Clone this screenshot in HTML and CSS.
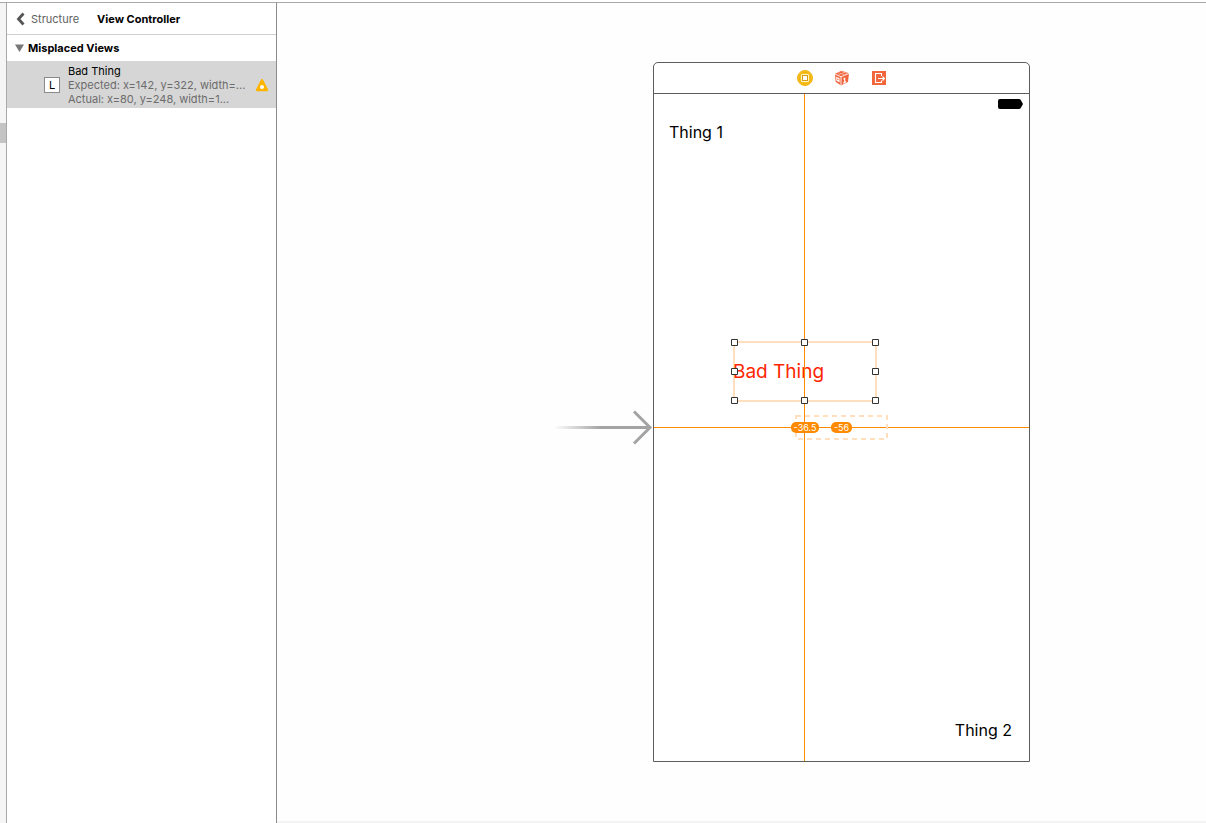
FILE: index.html
```html
<!DOCTYPE html>
<html lang="en">
<head>
<meta charset="utf-8">
<title>View Controller</title>
<link rel="stylesheet" href="styles.css">
</head>
<body>
<div class="workspace">
  <div class="gutter"><span class="gutter-thumb"></span></div>
  <aside class="outline">
    <nav class="crumbs">
      <button class="back" type="button">
        <svg width="9" height="14" viewBox="0 0 9 14" aria-hidden="true"><path d="M7.500 1.500 2.500 7l5 5.500" fill="none" stroke="#555" stroke-width="2.800"/></svg>
        <span>Structure</span>
      </button>
      <h1 class="crumb-title">View Controller</h1>
    </nav>
    <section>
      <h2 class="group">
        <svg width="9" height="8" viewBox="0 0 9 8" aria-hidden="true"><path d="M0 0.500h9L4.500 8z" fill="#777"/></svg>
        <span>Misplaced Views</span>
      </h2>
      <div class="issue">
        <span class="kind">L</span>
        <div class="details">
          <p class="name">Bad Thing</p>
          <p>Expected: x=142, y=322, width=...</p>
          <p>Actual: x=80, y=248, width=1...</p>
        </div>
        <button class="warn" type="button" aria-label="Misplaced view warning">
          <svg width="14" height="14" viewBox="0 0 14 14" aria-hidden="true"><path d="M7 2.200 12 12H2z" fill="#ffb400" stroke="#ffb400" stroke-width="2.400" stroke-linejoin="round"/><circle cx="7" cy="9" r="2" fill="#fff"/></svg>
        </button>
      </div>
    </section>
  </aside>
  <main class="canvas">
    <svg class="entry" width="100" height="36" viewBox="0 0 100 36" aria-hidden="true">
      <defs><linearGradient id="fade"><stop offset="0" stop-color="#a3a3a3" stop-opacity="0"/><stop offset=".5" stop-color="#a3a3a3"/></linearGradient></defs>
      <path d="M1 17h95v3H1z" fill="url(#fade)"/>
      <path d="M81 2.500 97 18.500 81 34.500" fill="none" stroke="#a3a3a3" stroke-width="3"/>
    </svg>
    <article class="scene">
      <header class="dock">
        <svg width="16" height="16" viewBox="0 0 16 16" aria-hidden="true"><circle cx="8" cy="8" r="7.500" fill="#fbc51b" stroke="#eeb014"/><circle cx="8" cy="8" r="5.800" fill="none" stroke="#e8aa12" stroke-width=".8"/><path d="M4.500 4.500h7v7h-7z" fill="#d99a16" stroke="#fff3c8"/><path d="M6 6h4v4H6z" fill="#fff"/></svg>
        <svg width="16" height="16" viewBox="0 0 16 16" aria-hidden="true"><path d="M7.500.800 15 3.200 14 12 7 15.500 1.600 11.800 1 3.800z" fill="#f0643c"/><path d="M1 4 7 6.800 15 3.400M7 6.800v8.700" fill="none" stroke="#fff" stroke-width=".9"/><path d="M4 2.700 11 5M7.500 1.500 13 3.500M11.500 2 4 5" fill="none" stroke="#fbc0ac" stroke-width=".6"/><path d="M2.800 7.500 5 8.500v3L2.800 10.200zM9.500 9.200l1.200-.8v4.200m-1.500.700 3-1.500" fill="none" stroke="#fff" stroke-width="1.100"/></svg>
        <svg width="16" height="16" viewBox="0 0 16 16" aria-hidden="true"><path d="M1 1h14v14H1z" fill="#f2663c"/><path d="M10.500 6V3.500h-6v9h6V10.500M7 8.500h6M11.500 6.500l2 2-2 2" fill="none" stroke="#fff" stroke-width="1.100"/></svg>
      </header>
      <div class="screen">
        <div class="status">
          <svg width="25" height="10" viewBox="0 0 25 10" aria-hidden="true"><rect width="23" height="10" rx="2"/><path d="M22 1.500h1l2 3.500-2 3.500h-1z"/></svg>
        </div>
        <p class="label">Thing 1</p>
        <p class="label label-end">Thing 2</p>
        <div class="guide guide-h"></div>
        <div class="selection"><span>Bad Thing</span></div>
        <svg class="expected" width="93" height="25" viewBox="0 0 93 25" aria-hidden="true"><rect x="1" y="1" width="91" height="23" fill="none" stroke="#ffdfbd" stroke-width="2" stroke-dasharray="5 4"/></svg>
        <div class="guide guide-v"></div>
        <svg class="handles" width="148" height="65" viewBox="0 0 148 65" aria-hidden="true">
          <g fill="#fff" stroke="#333">
            <path d="M.500.500h6v6h-6zM70.500.500h6v6h-6zM141.500.500h6v6h-6zM.500 29.500h6v6h-6zM141.500 29.500h6v6h-6zM.500 58.500h6v6h-6zM70.500 58.500h6v6h-6zM141.500 58.500h6v6h-6z"/>
          </g>
        </svg>
        <span class="offset offset-x">-36.5</span>
        <span class="offset offset-y">-56</span>
      </div>
    </article>
  </main>
</div>
</body>
</html>
```
FILE: styles.css
```css
* { box-sizing: border-box; }
body {
  margin: 0;
  background: #fff;
  color: #000;
  font: 11px/14px Inter, "Liberation Sans", sans-serif;
}
h1, h2, p { margin: 0; font-size: inherit; }
button { border: 0; padding: 0; background: none; font: inherit; color: inherit; }
svg { display: block; flex: none; }

.workspace {
  display: flex;
  min-height: 100vh;
  padding-top: 2px;
}
.gutter {
  width: 7px;
  padding-top: 120px;
  border-top: 1px solid #a8a8a8;
  border-right: 1px solid #a8a8a8;
  background: #f5f5f5;
}
.gutter-thumb { display: block; height: 20px; background: #c4c4c4; }

.outline {
  width: 270px;
  border-top: 1px solid #a8a8a8;
  border-right: 1px solid #8c8c8c;
}
.crumbs {
  display: flex;
  align-items: center;
  gap: 18px;
  height: 32px;
  padding-left: 9px;
  border-bottom: 1px solid #cfcfcf;
}
.back { display: flex; align-items: center; gap: 6px; color: #606060; }
.crumb-title, .group { font-weight: 700; }
.group {
  display: flex;
  align-items: center;
  gap: 4px;
  height: 26px;
  padding-left: 8px;
}
.issue {
  display: flex;
  align-items: center;
  gap: 8px;
  height: 47px;
  padding: 0 7px 0 37px;
  background: #d6d6d6;
  color: #6c6c6c;
}
.kind {
  width: 16px;
  height: 16px;
  border: 1px solid #8a8a8a;
  background: #fff;
  color: #000;
  text-align: center;
}
.details { flex: 1; white-space: nowrap; }
.name { color: #000; }

.canvas {
  position: relative;
  flex: 1;
  border-top: 1px solid #a8a8a8;
  border-bottom: 2px solid #f3f3f3;
  background: #fefefe;
}
.entry { position: absolute; left: 276px; top: 406px; }
.scene {
  position: absolute;
  left: 376px;
  top: 59px;
  width: 377px;
  border: 1px solid #5c5c5c;
  border-radius: 5px 5px 0 0;
  background: #fff;
}
.dock {
  display: flex;
  align-items: center;
  justify-content: center;
  gap: 21px;
  height: 31px;
  border-bottom: 1px solid #5c5c5c;
}
.screen {
  position: relative;
  display: flex;
  flex-direction: column;
  height: 667px;
  padding: 5px 17px 20px 15px;
}
.status {
  display: flex;
  justify-content: flex-end;
  height: 22px;
  margin-right: -11px;
}
.label { font-size: 16px; line-height: 22px; }
.label-end { margin-top: auto; text-align: right; }

.guide { position: absolute; background: #ff8a00; }
.guide-v { left: 150px; top: 0; bottom: 0; width: 1px; }
.guide-h { left: 0; right: 0; top: 333px; height: 1px; }
.selection {
  position: absolute;
  left: 79px;
  top: 247px;
  display: flex;
  align-items: center;
  width: 144px;
  height: 61px;
  border: solid #ffdfbd;
  border-width: 2px;
  color: #ff2600;
  font-size: 19px;
  white-space: nowrap;
}
.selection span { margin-left: -2px; }
.expected { position: absolute; left: 141px; top: 321px; }
.handles { position: absolute; left: 77px; top: 245px; }
.offset {
  position: absolute;
  height: 11px;
  border-radius: 5px;
  background: #ff8a00;
  color: #fff;
  font-size: 9px;
  line-height: 11px;
  text-align: center;
}
.offset-x { left: 137px; top: 328px; width: 28px; }
.offset-y { left: 177px; top: 328px; width: 21px; }
```
